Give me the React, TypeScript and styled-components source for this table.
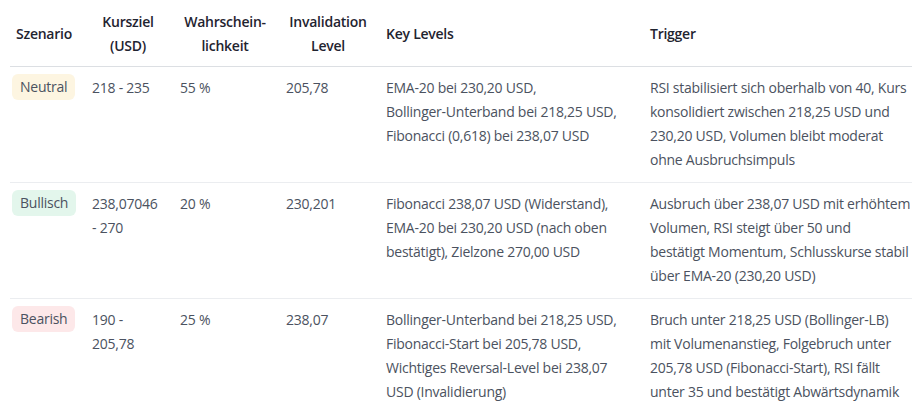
import React from "react";
import styled, { createGlobalStyle } from "styled-components";

const Global = createGlobalStyle`
  html, body { margin: 0; padding: 0; background: #ffffff; }
  body { font-family: "Open Sans", "Noto Sans", sans-serif; }
`;

const Wrap = styled.div`
  padding: 0 8px 0 10px;
`;

const Table = styled.table`
  width: 902px;
  border-collapse: collapse;
  table-layout: fixed;
  font-size: 14px;
  letter-spacing: -0.25px;
  line-height: 24px;
`;

const Th = styled.th<{ $center?: boolean; $first?: boolean }>`
  text-align: ${(p) => (p.$center ? "center" : "left")};
  vertical-align: middle;
  font-weight: 600;
  color: #1f2430;
  padding: 10px 8px 8px ${(p) => (p.$first ? "2px" : "8px")};
  border-bottom: 1px solid #dcdfe3;
  white-space: nowrap;
`;

const Row = styled.tr`
  & + & td {
    border-top: 1px solid #ebedf0;
  }
`;

const Td = styled.td<{ $first?: boolean }>`
  vertical-align: top;
  color: #4b5260;
  padding: 9px 4px 10px ${(p) => (p.$first ? "2px" : "8px")};
  white-space: nowrap;
`;

type Tone = "neutral" | "bull" | "bear";

const toneBg: Record<Tone, string> = {
  neutral: "#fdf5e1",
  bull: "#e3f6ec",
  bear: "#fde8e9",
};

const Badge = styled.span<{ $tone: Tone }>`
  display: inline-block;
  vertical-align: top;
  margin-top: -2px;
  height: 26px;
  line-height: 26px;
  padding: 0 8px;
  border-radius: 6px;
  background: ${(p) => toneBg[p.$tone]};
  color: #4b5260;
`;

const Lines = ({ lines }: { lines: string[] }) => (
  <>
    {lines.map((l, i) => (
      <React.Fragment key={i}>
        {i > 0 && <br />}
        {l}
      </React.Fragment>
    ))}
  </>
);

type Scenario = {
  name: string;
  tone: Tone;
  target: string[];
  prob: string;
  inval: string;
  levels: string[];
  trigger: string[];
};

const data: Scenario[] = [
  {
    name: "Neutral",
    tone: "neutral",
    target: ["218 - 235"],
    prob: "55 %",
    inval: "205,78",
    levels: [
      "EMA-20 bei 230,20 USD,",
      "Bollinger-Unterband bei 218,25 USD,",
      "Fibonacci (0,618) bei 238,07 USD",
    ],
    trigger: [
      "RSI stabilisiert sich oberhalb von 40, Kurs",
      "konsolidiert zwischen 218,25 USD und",
      "230,20 USD, Volumen bleibt moderat",
      "ohne Ausbruchsimpuls",
    ],
  },
  {
    name: "Bullisch",
    tone: "bull",
    target: ["238,07046", "- 270"],
    prob: "20 %",
    inval: "230,201",
    levels: [
      "Fibonacci 238,07 USD (Widerstand),",
      "EMA-20 bei 230,20 USD (nach oben",
      "bestätigt), Zielzone 270,00 USD",
    ],
    trigger: [
      "Ausbruch über 238,07 USD mit erhöhtem",
      "Volumen, RSI steigt über 50 und",
      "bestätigt Momentum, Schlusskurse stabil",
      "über EMA-20 (230,20 USD)",
    ],
  },
  {
    name: "Bearish",
    tone: "bear",
    target: ["190 -", "205,78"],
    prob: "25 %",
    inval: "238,07",
    levels: [
      "Bollinger-Unterband bei 218,25 USD,",
      "Fibonacci-Start bei 205,78 USD,",
      "Wichtiges Reversal-Level bei 238,07",
      "USD (Invalidierung)",
    ],
    trigger: [
      "Bruch unter 218,25 USD (Bollinger-LB)",
      "mit Volumenanstieg, Folgebruch unter",
      "205,78 USD (Fibonacci-Start), RSI fällt",
      "unter 35 und bestätigt Abwärtsdynamik",
    ],
  },
];

export default function App() {
  return (
    <Wrap>
      <Global />
      <Table>
        <colgroup>
          <col style={{ width: 74 }} />
          <col style={{ width: 88 }} />
          <col style={{ width: 106 }} />
          <col style={{ width: 100 }} />
          <col style={{ width: 264 }} />
          <col style={{ width: 270 }} />
        </colgroup>
        <thead>
          <tr>
            <Th $center $first>Szenario</Th>
            <Th $center>
              <Lines lines={["Kursziel", "(USD)"]} />
            </Th>
            <Th $center>
              <Lines lines={["Wahrschein-", "lichkeit"]} />
            </Th>
            <Th $center>
              <Lines lines={["Invalidation", "Level"]} />
            </Th>
            <Th>Key Levels</Th>
            <Th>Trigger</Th>
          </tr>
        </thead>
        <tbody>
          {data.map((s) => (
            <Row key={s.name}>
              <Td $first>
                <Badge $tone={s.tone}>{s.name}</Badge>
              </Td>
              <Td>
                <Lines lines={s.target} />
              </Td>
              <Td>{s.prob}</Td>
              <Td>{s.inval}</Td>
              <Td>
                <Lines lines={s.levels} />
              </Td>
              <Td>
                <Lines lines={s.trigger} />
              </Td>
            </Row>
          ))}
        </tbody>
      </Table>
    </Wrap>
  );
}
